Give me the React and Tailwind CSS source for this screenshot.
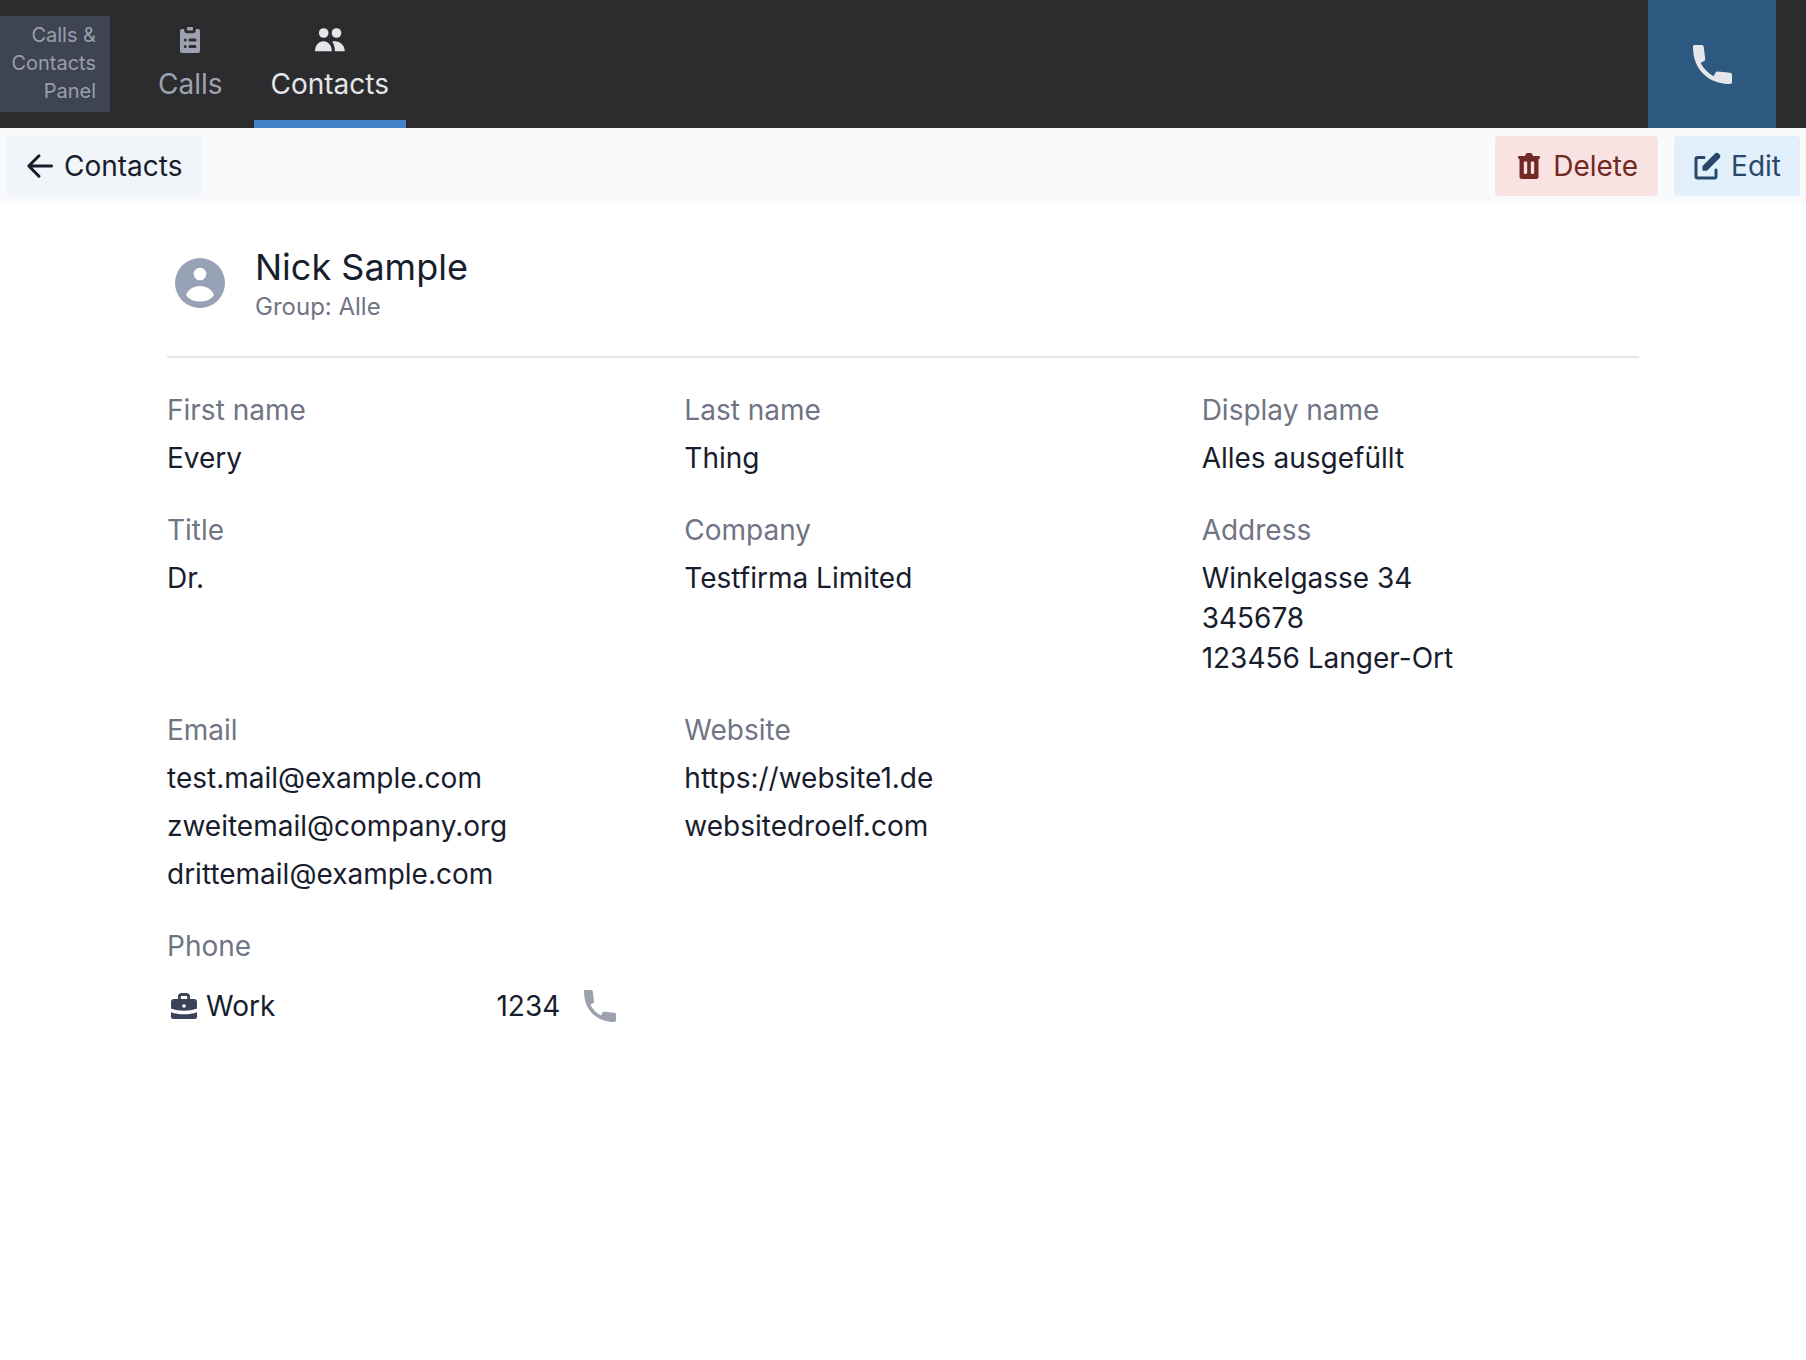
const PHONE = "M1.2 0h7.5c1.1 0 1.9.7 2 1.8l1.500 12c.1.800-.1 1.500-.6 2l-4 2.300c3 5.700 7.600 10.200 13 13.100l2-3.800c.5-.700 1.300-1 2.300-.9l12.100 1.300c1.100.1 2 .9 2 2v7.200c0 1.200-.8 2-2 2C15 39 0 24 0 2.200 0 .9.3 0 1.200 0z";

function PhoneIcon({ className }) {
  return (
    <svg viewBox="0 0 39 39" fill="currentColor" aria-hidden="true" className={className}>
      <path d={PHONE} />
    </svg>
  );
}

function ClipboardIcon() {
  return (
    <svg viewBox="0 0 20 26" fill="currentColor" aria-hidden="true" className="h-[26px] w-5">
      <rect x="7" y="0" width="6" height="3.500" rx="1" />
      <path
        fillRule="evenodd"
        d="M2 2h2.200v1.500C4.200 5 5.500 6.300 7 6.300h6c1.500 0 2.800-1.300 2.800-2.800V2H18a2 2 0 0 1 2 2v20a2 2 0 0 1-2 2H2a2 2 0 0 1-2-2V4a2 2 0 0 1 2-2zM5.200 11.500a1.500 1.500 0 1 0 0 3 1.500 1.500 0 0 0 0-3zM10 11.500a1.500 1.500 0 0 0 0 3h5a1.500 1.500 0 0 0 0-3zM5.200 17.900a1.500 1.500 0 1 0 0 3 1.500 1.500 0 0 0 0-3zM10 17.900a1.500 1.500 0 0 0 0 3h5a1.500 1.500 0 0 0 0-3z"
      />
    </svg>
  );
}

function PeopleIcon() {
  return (
    <svg viewBox="0 0 30 24" fill="currentColor" aria-hidden="true" className="h-6 w-[30px]">
      <circle cx="8.700" cy="5" r="4.800" />
      <circle cx="21.500" cy="5" r="4.800" />
      <path d="M0 23.300C0 17.500 3.500 13.200 8.400 13.200s8.400 4.300 8.400 10.100z" />
      <path d="M17.300 13.700c1.300-.4 2.600-.5 4-.3 4.900.5 8.500 4.700 8.500 9.900H19.900c0-3.800-.8-7-2.600-9.600z" />
    </svg>
  );
}

function ArrowIcon() {
  return (
    <svg viewBox="0 0 28 28" fill="none" stroke="currentColor" strokeWidth="3" strokeLinecap="round" strokeLinejoin="round" aria-hidden="true" className="size-7">
      <path d="M13 3.800 2.800 14 13 24.200M3 14h22.500" />
    </svg>
  );
}

function TrashIcon() {
  return (
    <svg viewBox="0 0 28 28" fill="currentColor" aria-hidden="true" className="size-7">
      <path
        fillRule="evenodd"
        d="M3 5.200c0-.7.500-1.200 1.200-1.200H10l.8-1.800c.4-.8 1-1.200 1.800-1.200h2.800c.8 0 1.400.4 1.800 1.200L18 4h5.800c.7 0 1.200.5 1.200 1.200v.6c0 .7-.5 1.200-1.200 1.200H23.500v17.500a2.500 2.500 0 0 1-2.500 2.500H7a2.500 2.500 0 0 1-2.500-2.500V7h-.3C3.500 7 3 6.500 3 5.800zM10 9.500c-.7 0-1.200.5-1.200 1.200v10.100c0 .7.500 1.200 1.200 1.200h1c.7 0 1.200-.5 1.200-1.200V10.700c0-.7-.5-1.200-1.200-1.200zM17 9.500c-.7 0-1.200.5-1.200 1.200v10.100c0 .7.500 1.200 1.200 1.200h1c.7 0 1.200-.5 1.200-1.200V10.700c0-.7-.5-1.200-1.200-1.200z"
      />
    </svg>
  );
}

function EditIcon() {
  return (
    <svg viewBox="0 0 28 28" fill="none" stroke="currentColor" strokeWidth="3" strokeLinecap="round" strokeLinejoin="round" aria-hidden="true" className="size-7">
      <path d="M11 5.500H4.500A1.500 1.500 0 0 0 3 7v17.500A1.500 1.500 0 0 0 4.500 26h17a1.500 1.500 0 0 0 1.500-1.500V18" />
      <path d="M9.500 14 21.500 1.900a3.200 3.200 0 0 1 4.700 4.700L14 18.700H9.500z" fill="currentColor" stroke="none" />
    </svg>
  );
}

function AvatarIcon() {
  return (
    <svg viewBox="0 0 64 64" aria-hidden="true" className="size-16 shrink-0">
      <circle cx="33" cy="32" r="25" fill="#98a2b7" />
      <circle cx="33" cy="23" r="6.300" fill="#fff" />
      <path d="M19 44c2-5.300 7.500-9 14-9s12 3.700 14 9c-2.300 3.800-7.500 6.500-14 6.500S21.300 47.800 19 44z" fill="#fff" />
    </svg>
  );
}

function BriefcaseIcon() {
  return (
    <svg viewBox="0 0 28 28" fill="#3a4358" aria-hidden="true" className="size-7 shrink-0">
      <path
        fillRule="evenodd"
        d="M8 7V4.500C8 2.500 9.500 1 11.500 1h5C18.500 1 20 2.500 20 4.500V7h4a3 3 0 0 1 3 3v6.500C19 19.500 9 19.500 1 16.500V10a3 3 0 0 1 3-3zM10.800 7h6.400V4.800c0-.5-.3-.8-.8-.8h-4.800c-.5 0-.8.3-.8.8zM14 12.200a1.800 1.800 0 1 0 0 3.600 1.800 1.800 0 0 0 0-3.600z"
      />
      <path d="M1 20.200c8 2.800 18 2.800 26 0V24.500a2.500 2.500 0 0 1-2.500 2.500h-21A2.500 2.500 0 0 1 1 24.500z" />
    </svg>
  );
}

function Field({ label, values }) {
  return (
    <div className="flex flex-col gap-2">
      <dt className="text-[#6f7583]">{label}</dt>
      {values.map((value) => (
        <dd key={value} className="whitespace-pre-line">{value}</dd>
      ))}
    </div>
  );
}

export default function App() {
  return (
    <div className="min-h-screen bg-white font-['Inter',sans-serif] text-[28px] leading-10 text-[#171d2c]">
      <header className="flex h-32 bg-[#2c2c2e] pr-[30px]">
        <div className="my-4 w-[110px] bg-[#3e4452] pt-[5px] pr-3.5 text-right text-xl leading-7 text-[#9a9fac]">
          Calls & Contacts Panel
        </div>
        <nav className="ml-[31px] flex gap-3.5">
          <a href="#calls" className="flex flex-col items-center border-b-8 border-transparent px-[17px] text-[#9ea2b0]">
            <span className="mt-6 flex h-8 items-center"><ClipboardIcon /></span>
            <span className="mt-2">Calls</span>
          </a>
          <a href="#contacts" aria-current="page" className="flex flex-col items-center border-b-8 border-[#4183c4] px-[17px] text-[#e5e6ea]">
            <span className="mt-6 flex h-8 items-center"><PeopleIcon /></span>
            <span className="mt-2">Contacts</span>
          </a>
        </nav>
        <button type="button" aria-label="Open dialer" className="ml-auto flex w-32 items-center justify-center bg-[#2d5880] text-[#e5e6ea]">
          <PhoneIcon className="size-[39px]" />
        </button>
      </header>

      <div className="flex gap-4 bg-[#f9fafc] px-1.5 py-2">
        <button type="button" className="mr-auto flex h-[60px] items-center gap-2.5 rounded bg-[#f1f4f8] px-5">
          <ArrowIcon />
          Contacts
        </button>
        <button type="button" className="flex h-[60px] items-center gap-2.5 rounded bg-[#f8e2e2] px-5 text-[#702923]">
          <TrashIcon />
          Delete
        </button>
        <button type="button" className="flex h-[60px] items-center gap-2.5 rounded bg-[#e2f0fc] px-[19px] text-[#28486b]">
          <EditIcon />
          Edit
        </button>
      </div>

      <main className="mx-auto max-w-[1472px] pt-[39px]">
        <div className="flex items-center gap-6 border-b-2 border-[#e4e5ea] pb-[33px]">
          <AvatarIcon />
          <div>
            <h1 className="text-4xl leading-12">Nick Sample</h1>
            <p className="text-2xl leading-8 text-[#6f7583]">Group: Alle</p>
          </div>
        </div>

        <dl className="mt-8 grid grid-cols-3 gap-x-20 gap-y-8">
          <Field label="First name" values={["Every"]} />
          <Field label="Last name" values={["Thing"]} />
          <Field label="Display name" values={["Alles ausgefüllt"]} />
          <Field label="Title" values={["Dr."]} />
          <Field label="Company" values={["Testfirma Limited"]} />
          <Field label="Address" values={["Winkelgasse 34\n345678\n123456 Langer-Ort"]} />
          <Field label="Email" values={["test.mail@example.com", "zweitemail@company.org", "drittemail@example.com"]} />
          <Field label="Website" values={["https://website1.de", "websitedroelf.com"]} />
          <div className="col-start-1 -mr-7 flex flex-col gap-2">
            <dt className="text-[#6f7583]">Phone</dt>
            <dd className="flex h-16 items-center">
              <span className="flex items-center gap-2 pl-[3px]">
                <BriefcaseIcon />
                Work
              </span>
              <span className="ml-auto">1234</span>
              <button type="button" aria-label="Call 1234" className="ml-2 flex size-16 items-center justify-center text-[#9ca1ae]">
                <PhoneIcon className="size-8" />
              </button>
            </dd>
          </div>
        </dl>
      </main>
    </div>
  );
}
